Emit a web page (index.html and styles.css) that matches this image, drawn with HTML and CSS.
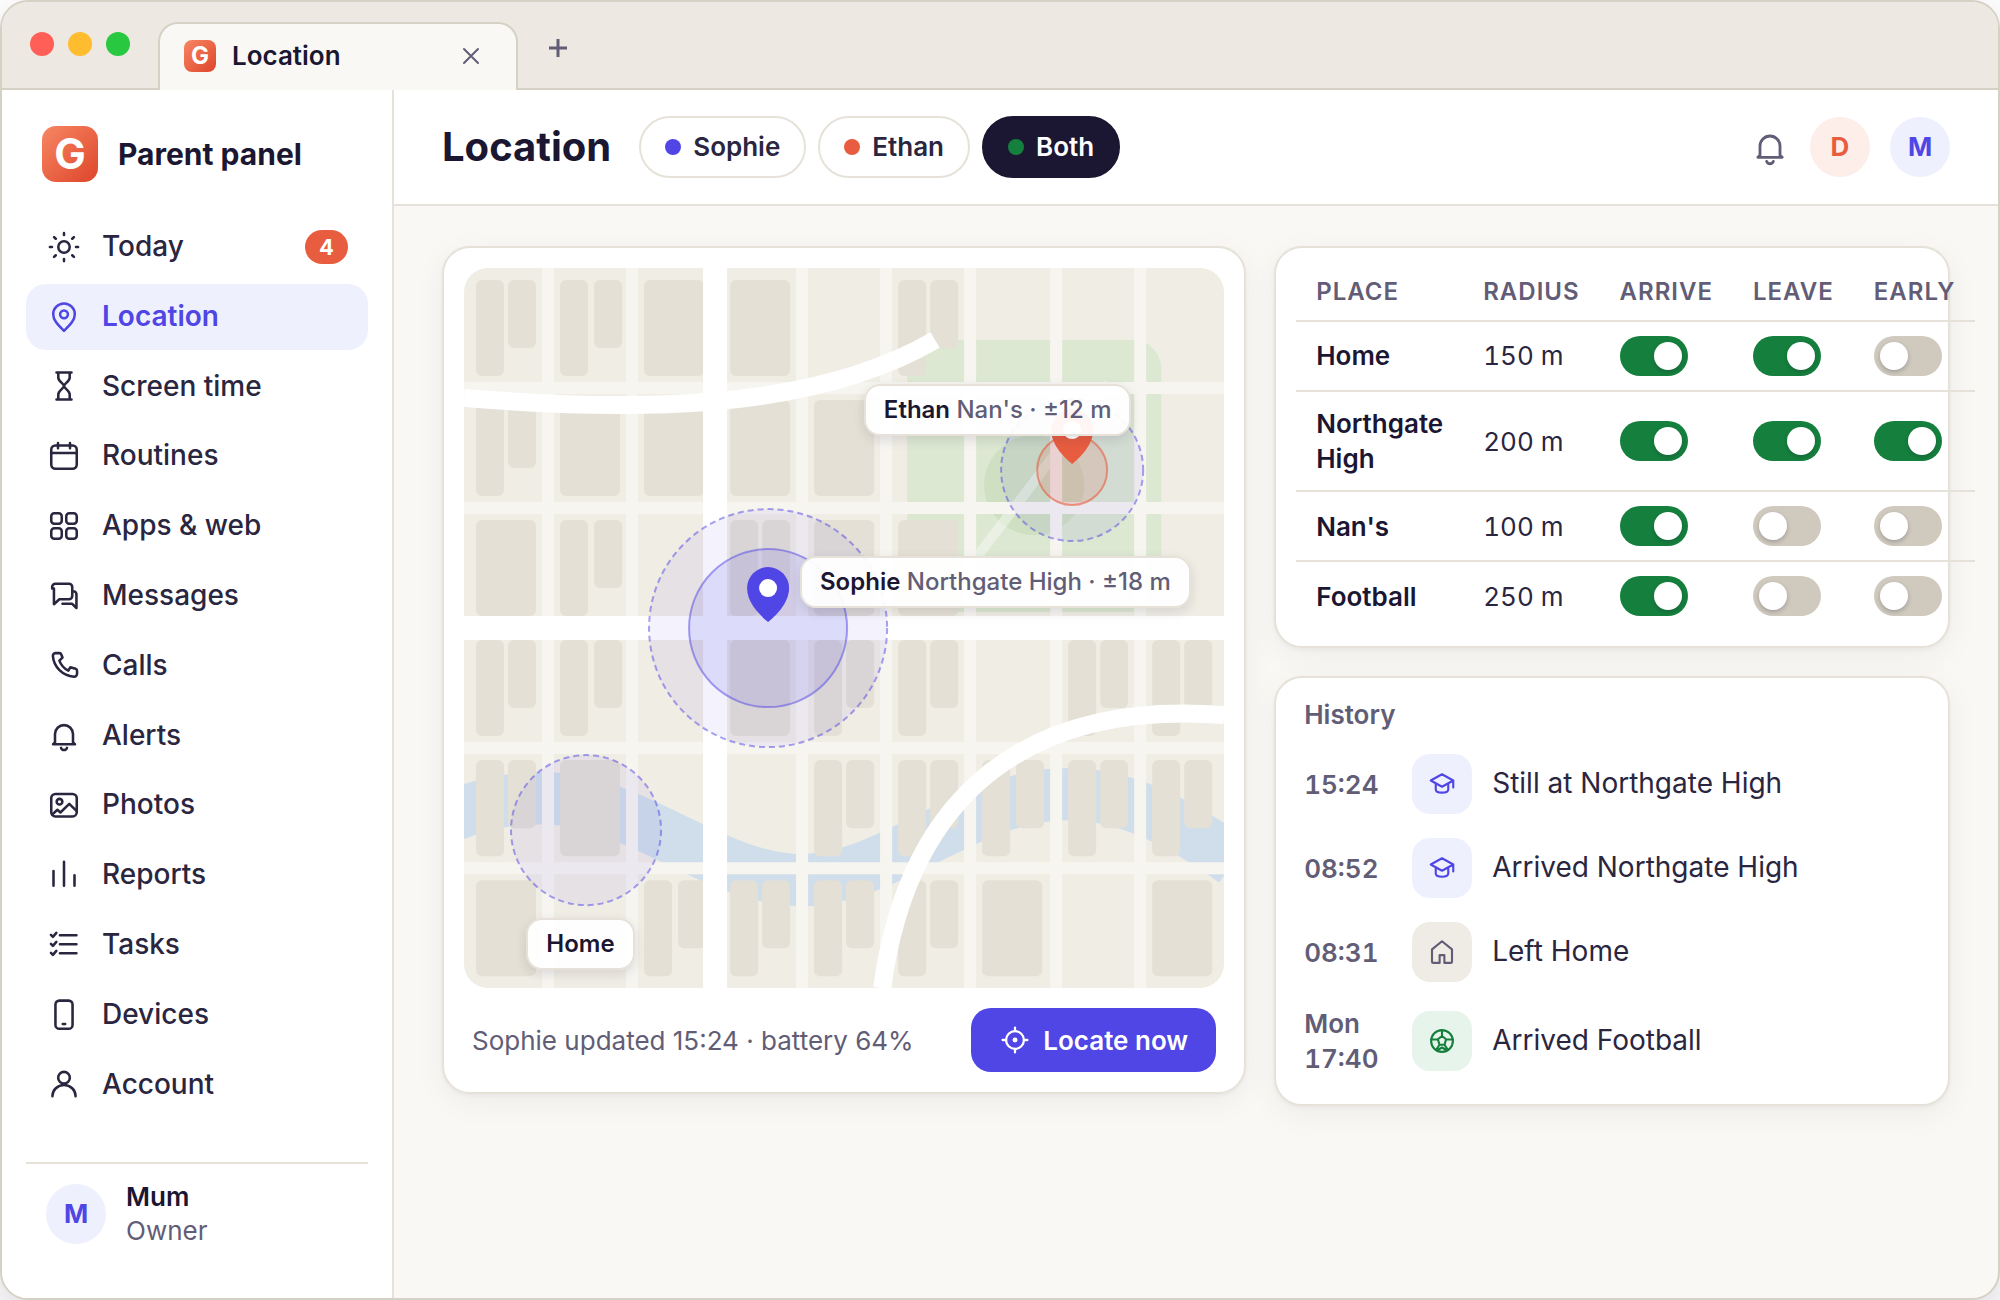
FILE: index.html
```html
<!DOCTYPE html>
<html lang="en">
<head>
<meta charset="utf-8">
<meta name="viewport" content="width=device-width, initial-scale=1">
<title>Location</title>
<link rel="stylesheet" href="styles.css">
</head>
<body>
<div class="window">
  <div class="titlebar">
    <div class="lights"><span class="light light-red"></span><span class="light light-amber"></span><span class="light light-green"></span></div>
    <div class="tab">
      <span class="logo logo-small">G</span>
      <span class="tab-title">Location</span>
      <button class="tab-button" type="button" aria-label="Close tab"><svg width="18" height="18" viewBox="0 0 18 18"><path d="M2 2l14 14M16 2L2 16"/></svg></button>
    </div>
    <button class="tab-button tab-new" type="button" aria-label="New tab"><svg width="18" height="18" viewBox="0 0 18 18"><path class="plus" d="M9 0v18M0 9h18"/></svg></button>
  </div>

  <div class="app">
    <aside class="sidebar">
      <div class="brand"><span class="logo">G</span><span class="brand-name">Parent panel</span></div>
      <nav class="nav">
        <a class="nav-item" href="#today"><svg class="icon" viewBox="0 0 24 24"><circle cx="12" cy="12" r="3.8"/><path d="M12 2.6V4M12 20v1.4M2.6 12H4M20 12h1.4M5.400 5.400l1.100 1.100M17.500 17.500l1.100 1.100M5.400 18.600l1.100-1.100M17.500 6.500l1.100-1.100"/></svg>Today<span class="badge">4</span></a>
        <a class="nav-item nav-active" href="#location" aria-current="page"><svg class="icon" viewBox="0 0 24 24"><path d="M12 21.2c4.4-4.2 7.2-7.2 7.2-11a7.2 7.2 0 0 0-14.4 0c0 3.8 2.8 6.8 7.2 11z"/><circle cx="12" cy="10.2" r="2.6"/></svg>Location</a>
        <a class="nav-item" href="#screen-time"><svg class="icon" viewBox="0 0 24 24"><path d="M7 3h10M7 21h10M8.2 3v3.5c0 2.5 3.8 4 3.8 5.5s-3.8 3-3.8 5.5V21M15.8 3v3.5c0 2.5-3.8 4-3.8 5.5s3.8 3 3.8 5.5V21"/></svg>Screen time</a>
        <a class="nav-item" href="#routines"><svg class="icon" viewBox="0 0 24 24"><rect x="3.5" y="5" width="17" height="15.5" rx="2.8"/><path d="M3.5 10h17M8 3.3v3.5M16 3.3v3.5"/></svg>Routines</a>
        <a class="nav-item" href="#apps"><svg class="icon" viewBox="0 0 24 24"><rect x="3.5" y="3.5" width="7" height="7" rx="2"/><rect x="13.5" y="3.5" width="7" height="7" rx="2"/><rect x="3.5" y="13.5" width="7" height="7" rx="2"/><rect x="13.5" y="13.5" width="7" height="7" rx="2"/></svg>Apps &amp; web</a>
        <a class="nav-item" href="#messages"><svg class="icon" viewBox="0 0 24 24"><path d="M4.1 7V6a2.2 2.2 0 0 1 2.2-2.2h9a2.2 2.2 0 0 1 2.2 2.2v6a2.2 2.2 0 0 1-2.2 2.2H8.9l-3.6 3.3V7H4.1M17.5 8.8h.8a2 2 0 0 1 2 2V20l-3-2.9h-6.3"/></svg>Messages</a>
        <a class="nav-item" href="#calls"><svg class="icon" viewBox="0 0 24 24"><path d="M6.2 3.4h2.9c.5 0 .8.3 1 .8l.9 2.2-2.1 2c1.1 2.9 3.1 5.3 6 6.7l1.3-2.2 3.6 1c.6.2.9.6.9 1.2v2.2a1.9 1.9 0 0 1-2.1 1.8C11 18.4 5.2 12.7 4.6 5.4a1.8 1.8 0 0 1 1.6-2z"/></svg>Calls</a>
        <a class="nav-item" href="#alerts"><svg class="icon" viewBox="0 0 24 24"><path d="M6 17v-5.6a6 6 0 0 1 12 0V17l1.3 1.2H4.7L6 17zM10 20.6a2.1 2.1 0 0 0 4 0"/></svg>Alerts</a>
        <a class="nav-item" href="#photos"><svg class="icon" viewBox="0 0 24 24"><rect x="3.5" y="4.6" width="17" height="15" rx="2.8"/><circle cx="9" cy="9.8" r="1.9"/><path d="M4.1 18.4l3.5-3.2 2 1.8 5.9-5.7 5 4.8"/></svg>Photos</a>
        <a class="nav-item" href="#reports"><svg class="icon" viewBox="0 0 24 24"><path d="M5 9.3V19.2M12 3.2v16M19 12.2v7"/></svg>Reports</a>
        <a class="nav-item" href="#tasks"><svg class="icon" viewBox="0 0 24 24"><path d="M9.3 5.5h11M9.3 11.5h11M9.3 17.5h11M3.3 5.3l1.3 1.3 2.3-2.7M3.3 11.3l1.3 1.3 2.3-2.7M3.3 17.3l1.3 1.3 2.3-2.7"/></svg>Tasks</a>
        <a class="nav-item" href="#devices"><svg class="icon" viewBox="0 0 24 24"><rect x="6.3" y="2.4" width="11.4" height="18.8" rx="2.6"/><path d="M11.2 18h1.6"/></svg>Devices</a>
        <a class="nav-item" href="#account"><svg class="icon" viewBox="0 0 24 24"><circle cx="12" cy="7.8" r="3.9"/><path d="M4.3 20.2v-.3a7.7 7.2 0 0 1 15.4 0v.3"/></svg>Account</a>
      </nav>
      <div class="profile">
        <span class="avatar avatar-indigo">M</span>
        <div class="profile-text"><span class="profile-name">Mum</span><span class="profile-role">Owner</span></div>
      </div>
    </aside>

    <div class="content">
      <header class="topbar">
        <h1 class="page-title">Location</h1>
        <div class="pills">
          <button class="pill" type="button"><span class="dot dot-indigo"></span>Sophie</button>
          <button class="pill" type="button"><span class="dot dot-coral"></span>Ethan</button>
          <button class="pill pill-active" type="button"><span class="dot dot-green"></span>Both</button>
        </div>
        <div class="topbar-end">
          <button class="bell" type="button" aria-label="Notifications"><svg class="icon" viewBox="0 0 24 24"><path d="M6 17v-5.6a6 6 0 0 1 12 0V17l1.3 1.2H4.7L6 17zM10 20.6a2.1 2.1 0 0 0 4 0"/></svg></button>
          <span class="avatar avatar-coral">D</span>
          <span class="avatar avatar-indigo">M</span>
        </div>
      </header>

      <main class="grid">
        <section class="card map-card">
          <div class="map">
            <svg class="map-art" viewBox="0 0 760 720" preserveAspectRatio="xMidYMid slice">
              <rect class="m-park" x="443" y="72" width="254" height="272" rx="28"/>
              <circle class="m-grove" cx="570" cy="217" r="50"/>
              <path class="m-path" d="M480 332L645 115"/>
              <path class="m-river" d="M-20 551C15 536 45 530 80 530C170 530 250 612 338 612C425 612 505 526 603 526C660 526 712 552 770 593"/>
              <g class="m-blocks">
                <rect x="12" y="12" width="28" height="96" rx="6"/><rect x="44" y="12" width="28" height="68" rx="6"/>
                <rect x="96" y="12" width="28" height="96" rx="6"/><rect x="130" y="12" width="28" height="68" rx="6"/>
                <rect x="180" y="12" width="60" height="96" rx="6"/>
                <rect x="266" y="12" width="60" height="96" rx="6"/>
                <rect x="434" y="12" width="28" height="96" rx="6"/><rect x="466" y="12" width="28" height="68" rx="6"/>
                <rect x="12" y="132" width="28" height="96" rx="6"/><rect x="44" y="132" width="28" height="68" rx="6"/>
                <rect x="96" y="132" width="60" height="96" rx="6"/>
                <rect x="180" y="132" width="60" height="96" rx="6"/>
                <rect x="266" y="132" width="60" height="96" rx="6"/>
                <rect x="350" y="132" width="60" height="96" rx="6"/>
                <rect x="12" y="252" width="60" height="96" rx="6"/>
                <rect x="96" y="252" width="28" height="96" rx="6"/><rect x="130" y="252" width="28" height="68" rx="6"/>
                <rect x="266" y="252" width="28" height="96" rx="6"/><rect x="298" y="252" width="28" height="68" rx="6"/>
                <rect x="350" y="252" width="60" height="96" rx="6"/>
                <rect x="434" y="252" width="60" height="96" rx="6"/>
                <rect x="12" y="372" width="28" height="96" rx="6"/><rect x="44" y="372" width="28" height="68" rx="6"/>
                <rect x="96" y="372" width="28" height="96" rx="6"/><rect x="130" y="372" width="28" height="68" rx="6"/>
                <rect x="266" y="372" width="60" height="96" rx="6"/>
                <rect x="350" y="372" width="28" height="96" rx="6"/><rect x="382" y="372" width="28" height="68" rx="6"/>
                <rect x="434" y="372" width="28" height="96" rx="6"/><rect x="466" y="372" width="28" height="68" rx="6"/>
                <rect x="604" y="372" width="28" height="96" rx="6"/><rect x="636" y="372" width="28" height="68" rx="6"/>
                <rect x="688" y="372" width="28" height="96" rx="6"/><rect x="720" y="372" width="28" height="68" rx="6"/>
                <rect x="12" y="492" width="28" height="96" rx="6"/><rect x="44" y="492" width="28" height="68" rx="6"/>
                <rect x="96" y="492" width="60" height="96" rx="6"/>
                <rect x="350" y="492" width="28" height="96" rx="6"/><rect x="382" y="492" width="28" height="68" rx="6"/>
                <rect x="434" y="492" width="28" height="96" rx="6"/><rect x="466" y="492" width="28" height="68" rx="6"/>
                <rect x="518" y="492" width="28" height="96" rx="6"/><rect x="552" y="492" width="28" height="68" rx="6"/>
                <rect x="604" y="492" width="28" height="96" rx="6"/><rect x="636" y="492" width="28" height="68" rx="6"/>
                <rect x="688" y="492" width="28" height="96" rx="6"/><rect x="720" y="492" width="28" height="68" rx="6"/>
                <rect x="12" y="612" width="60" height="96" rx="6"/>
                <rect x="180" y="612" width="28" height="96" rx="6"/><rect x="214" y="612" width="28" height="68" rx="6"/>
                <rect x="266" y="612" width="28" height="96" rx="6"/><rect x="298" y="612" width="28" height="68" rx="6"/>
                <rect x="350" y="612" width="28" height="96" rx="6"/><rect x="382" y="612" width="28" height="68" rx="6"/>
                <rect x="434" y="612" width="28" height="96" rx="6"/><rect x="466" y="612" width="28" height="68" rx="6"/>
                <rect x="518" y="612" width="60" height="96" rx="6"/>
                <rect x="688" y="612" width="60" height="96" rx="6"/>
              </g>
              <path class="m-street" d="M84 0V720M168 0V720M338 0V720M422 0V720M506 0V720M592 0V720M676 0V720M0 120H760M0 240H760M0 480H760M0 600H760"/>
              <path class="m-avenue" d="M251 0V720M0 360H760"/>
              <path class="m-curve" d="M0 130C150 142 340 148 471 72M418 720C445 520 570 432 760 447"/>
              <g class="m-zones">
                <circle cx="304" cy="360" r="119"/><circle cx="122" cy="562" r="75"/><circle cx="608" cy="202" r="71"/>
              </g>
              <circle class="m-near m-near-indigo" cx="304" cy="360" r="79"/>
              <circle class="m-near m-near-coral" cx="608" cy="202" r="35"/>
              <path class="pin-indigo" d="M304 354c-6-5-21-18-21-34a21 21 0 0 1 42 0c0 16-15 29-21 34z"/><circle class="pin-eye" cx="304" cy="320" r="9"/>
              <path class="pin-coral" d="M608 196c-6-5-21-18-21-34a21 21 0 0 1 42 0c0 16-15 29-21 34z"/><circle class="pin-eye" cx="608" cy="162" r="9"/>
            </svg>
            <span class="tag tag-ethan"><b>Ethan</b> Nan's · ±12 m</span>
            <span class="tag tag-sophie"><b>Sophie</b> Northgate High · ±18 m</span>
            <span class="tag tag-home"><b>Home</b></span>
          </div>
          <div class="map-foot">
            <span class="map-status">Sophie updated 15:24 · battery 64%</span>
            <button class="primary" type="button"><svg class="icon" viewBox="0 0 24 24"><circle cx="12" cy="12" r="6.7"/><path d="M12 2.7v2.6M12 18.7v2.6M2.7 12h2.6M18.7 12h2.6"/><circle class="solid" cx="12" cy="12" r="1"/></svg>Locate now</button>
          </div>
        </section>

        <div class="side">
          <section class="card places">
            <table class="table">
              <thead><tr><th scope="col">PLACE</th><th scope="col">RADIUS</th><th scope="col">ARRIVE</th><th scope="col">LEAVE</th><th scope="col">EARLY</th></tr></thead>
              <tbody>
                <tr><th scope="row">Home</th><td>150 m</td><td><input class="toggle" type="checkbox" aria-label="Home arrive" checked></td><td><input class="toggle" type="checkbox" aria-label="Home leave" checked></td><td><input class="toggle" type="checkbox" aria-label="Home early"></td></tr>
                <tr><th scope="row">Northgate High</th><td>200 m</td><td><input class="toggle" type="checkbox" aria-label="Northgate High arrive" checked></td><td><input class="toggle" type="checkbox" aria-label="Northgate High leave" checked></td><td><input class="toggle" type="checkbox" aria-label="Northgate High early" checked></td></tr>
                <tr><th scope="row">Nan's</th><td>100 m</td><td><input class="toggle" type="checkbox" aria-label="Nan's arrive" checked></td><td><input class="toggle" type="checkbox" aria-label="Nan's leave"></td><td><input class="toggle" type="checkbox" aria-label="Nan's early"></td></tr>
                <tr><th scope="row">Football</th><td>250 m</td><td><input class="toggle" type="checkbox" aria-label="Football arrive" checked></td><td><input class="toggle" type="checkbox" aria-label="Football leave"></td><td><input class="toggle" type="checkbox" aria-label="Football early"></td></tr>
              </tbody>
            </table>
          </section>

          <section class="card history">
            <h2 class="history-title">History</h2>
            <ul class="events">
              <li class="event"><time class="event-time">15:24</time><span class="event-icon event-indigo"><svg class="icon" viewBox="0 0 24 24"><path d="M3 9.2L12 4.2l9 5-9 5zM7 11.8v4.6c0 3.4 10 3.4 10 0v-4.6M21 9.2v5.5"/></svg></span>Still at Northgate High</li>
              <li class="event"><time class="event-time">08:52</time><span class="event-icon event-indigo"><svg class="icon" viewBox="0 0 24 24"><path d="M3 9.2L12 4.2l9 5-9 5zM7 11.8v4.6c0 3.4 10 3.4 10 0v-4.6M21 9.2v5.5"/></svg></span>Arrived Northgate High</li>
              <li class="event"><time class="event-time">08:31</time><span class="event-icon event-sand"><svg class="icon" viewBox="0 0 24 24"><path d="M4 9.9L12 3.4l8 6.5v9.8a1 1 0 0 1-1 1h-5.1v-6.2h-3.8v6.2H5a1 1 0 0 1-1-1z"/></svg></span>Left Home</li>
              <li class="event"><time class="event-time">Mon 17:40</time><span class="event-icon event-green"><svg class="icon" viewBox="0 0 24 24"><circle cx="12" cy="12" r="8.7"/><path d="M12 8l3.3 2.6-1.3 4.4h-4l-1.3-4.4zM12 3.3V8M15.3 10.6l5.2.2M8.7 10.6l-5.2.2M10 15l-2.8 4.2M14 15l2.8 4.2M8.2 19.4l3.8-2.2 3.8 2.2"/></svg></span>Arrived Football</li>
            </ul>
          </section>
        </div>
      </main>
    </div>
  </div>
</div>
</body>
</html>
```
FILE: styles.css
```css
* { box-sizing: border-box; }

:root {
  --ink: #1b1631;
  --text: #2a2640;
  --muted: #625d76;
  --indigo: #4f46e5;
  --indigo-soft: #eef0fe;
  --coral: #e85d40;
  --coral-soft: #fdeeea;
  --green: #15803d;
  --green-soft: #e7f4eb;
  --sand: #efece5;
  --line: #e7e2d9;
  --frame: #d6d1c5;
}

body {
  margin: 0;
  background: #fff;
  color: var(--text);
  font: 400 26px/1.35 Inter, "Liberation Sans", sans-serif;
}

button {
  margin: 0;
  border: 0;
  background: none;
  color: inherit;
  font: inherit;
  cursor: pointer;
}

.icon {
  width: 36px;
  height: 36px;
  flex: none;
  fill: none;
  stroke: currentColor;
  stroke-width: 1.7;
  stroke-linecap: round;
  stroke-linejoin: round;
}

.window {
  display: flex;
  flex-direction: column;
  min-height: 100vh;
  overflow: hidden;
  border: 2px solid var(--frame);
  border-radius: 28px;
  background: #f9f8f4;
  box-shadow: 0 24px 60px rgba(27, 22, 49, .18);
}

/* Browser chrome */
.titlebar {
  display: flex;
  height: 88px;
  padding-left: 28px;
  background: #ede8e1;
  box-shadow: inset 0 -2px var(--frame);
}
.lights { display: flex; gap: 14px; padding-top: 30px; }
.light { width: 24px; height: 24px; border-radius: 50%; }
.light-red { background: #ff5f57; }
.light-amber { background: #febc2e; }
.light-green { background: #28c840; }
.tab {
  display: flex;
  align-items: center;
  gap: 16px;
  width: 360px;
  margin: 20px 0 0 28px;
  padding: 0 26px 2px 24px;
  border: 2px solid var(--frame);
  border-bottom: 0;
  border-radius: 20px 20px 0 0;
  background: #f9f8f4;
}
.tab-title { flex: 1; color: var(--ink); font-weight: 600; }
.tab-button { display: flex; padding: 10px; color: var(--muted); }
.tab-button svg { fill: none; stroke: currentColor; stroke-width: 2; stroke-linecap: round; }
.tab-button .plus { stroke-width: 3; stroke-linecap: butt; }
.tab-new { align-self: center; margin: 4px 0 0 21px; }

.logo {
  display: grid;
  place-items: center;
  flex: none;
  width: 56px;
  height: 56px;
  border-radius: 14px;
  background: linear-gradient(135deg, #f78763, #de452b);
  color: #fff;
  font-size: 42px;
  font-weight: 700;
  line-height: 1;
}
.logo-small { width: 32px; height: 32px; border-radius: 8px; font-size: 24px; }

.app { display: flex; flex: 1; }

/* Sidebar */
.sidebar {
  display: flex;
  flex-direction: column;
  flex: none;
  width: 392px;
  padding: 36px 24px 50px;
  border-right: 2px solid var(--line);
  background: #fff;
}
.brand { display: flex; align-items: center; gap: 20px; padding: 0 16px; margin-bottom: 32px; }
.brand-name { color: var(--ink); font-size: 30px; font-weight: 700; }
.nav { display: flex; flex-direction: column; gap: 4px; }
.nav-item {
  display: flex;
  align-items: center;
  gap: 20px;
  padding: 14px 20px;
  border-radius: 20px;
  color: var(--text);
  font-size: 28px;
  font-weight: 500;
  text-decoration: none;
}
.nav-active { background: var(--indigo-soft); color: var(--indigo); font-weight: 600; }
.badge {
  margin-left: auto;
  padding: 0 14px;
  border-radius: 17px;
  background: var(--coral);
  color: #fff;
  font-size: 22px;
  font-weight: 700;
  line-height: 34px;
}
.profile {
  display: flex;
  align-items: center;
  gap: 20px;
  margin-top: auto;
  padding: 16px 20px 0;
  border-top: 2px solid var(--line);
}
.profile-text { display: flex; flex-direction: column; line-height: 34px; }
.profile-name { color: var(--ink); font-weight: 600; }
.profile-role { color: var(--muted); }
.avatar {
  display: grid;
  place-items: center;
  flex: none;
  width: 60px;
  height: 60px;
  border-radius: 50%;
  font-weight: 700;
}
.avatar-indigo { background: var(--indigo-soft); color: var(--indigo); }
.avatar-coral { background: var(--coral-soft); color: var(--coral); }

/* Top bar */
.content { flex: 1; min-width: 0; }
.topbar {
  display: flex;
  align-items: center;
  gap: 28px;
  height: 116px;
  padding: 0 48px;
  border-bottom: 2px solid var(--line);
  background: #fff;
}
.page-title { margin: 0; color: var(--ink); font-size: 40px; font-weight: 700; }
.pills { display: flex; gap: 12px; }
.pill {
  display: flex;
  align-items: center;
  gap: 12px;
  padding: 12px 24px;
  border: 2px solid var(--line);
  border-radius: 32px;
  background: #fff;
  color: var(--text);
  font-weight: 600;
  line-height: 34px;
}
.pill-active { border-color: var(--ink); background: var(--ink); color: #fff; }
.dot { width: 16px; height: 16px; border-radius: 50%; }
.dot-indigo { background: var(--indigo); }
.dot-coral { background: var(--coral); }
.dot-green { background: var(--green); }
.topbar-end { display: flex; align-items: center; gap: 20px; margin-left: auto; }
.bell { display: flex; padding: 0; color: var(--muted); }
.bell .icon { width: 40px; height: 40px; }

/* Cards */
.grid {
  display: grid;
  grid-template-columns: minmax(0, 1.19fr) minmax(0, 1fr);
  align-items: start;
  gap: 28px;
  padding: 40px 48px;
}
.card {
  border: 2px solid var(--line);
  border-radius: 28px;
  background: #fff;
  box-shadow: 0 2px 4px rgba(27, 22, 49, .04), 0 8px 32px rgba(27, 22, 49, .05);
}
.side { display: grid; grid-template-columns: minmax(0, 1fr); gap: 28px; }

/* Map */
.map-card { padding: 20px; }
.map {
  position: relative;
  aspect-ratio: 760 / 720;
  overflow: hidden;
  border-radius: 24px;
  background: #f0ede5;
}
.map-art { display: block; width: 100%; height: 100%; }
.m-park { fill: #dce8d2; }
.m-grove { fill: #cfe0c2; }
.m-path { fill: none; stroke: #fff; stroke-opacity: .4; stroke-width: 10; }
.m-river { fill: none; stroke: #cfdeea; stroke-width: 52; }
.m-blocks { fill: #e4e0d5; }
.m-street { fill: none; stroke: #f7f5f0; stroke-width: 12; }
.m-avenue { fill: none; stroke: #fff; stroke-width: 24; }
.m-curve { fill: none; stroke: #fff; stroke-width: 18; }
.m-zones { fill: rgba(79, 70, 229, .07); stroke: rgba(79, 70, 229, .5); stroke-width: 2; stroke-dasharray: 6 4; }
.m-near { stroke-width: 2; }
.m-near-indigo { fill: rgba(79, 70, 229, .13); stroke: rgba(79, 70, 229, .5); }
.m-near-coral { fill: rgba(232, 93, 64, .16); stroke: rgba(232, 93, 64, .6); }
.pin-indigo { fill: var(--indigo); }
.pin-coral { fill: var(--coral); }
.pin-eye { fill: #fff; }
.tag {
  position: absolute;
  padding: 8px 18px;
  border: 2px solid var(--line);
  border-radius: 16px;
  background: rgba(255, 255, 255, .94);
  box-shadow: 0 4px 12px rgba(27, 22, 49, .12);
  color: var(--muted);
  font-size: 24px;
  font-weight: 500;
  line-height: 32px;
  white-space: nowrap;
}
.tag b { color: var(--ink); font-weight: 600; }
.tag-ethan { left: 52.6%; top: 16.1%; }
.tag-sophie { left: 44.2%; top: 40%; }
.tag-home { left: 8.2%; top: 90.3%; }
.map-foot {
  display: flex;
  align-items: center;
  justify-content: space-between;
  padding: 20px 8px 0;
}
.map-status { color: var(--muted); }
.primary {
  display: flex;
  align-items: center;
  gap: 12px;
  height: 64px;
  padding: 0 28px;
  border-radius: 20px;
  background: var(--indigo);
  color: #fff;
  font-weight: 600;
}
.primary .icon { width: 32px; height: 32px; }
.primary .solid { fill: currentColor; }

/* Places table; it may run past the edge of its card */
.places { padding: 16px 20px; }
.table { border-spacing: 0; font-variant-numeric: tabular-nums; }
.table th, .table td { padding: 14px 20px; border-bottom: 2px solid var(--line); text-align: left; }
.table thead th {
  padding: 12px 20px;
  color: var(--muted);
  font-size: 24px;
  font-weight: 600;
  letter-spacing: 1px;
  line-height: 32px;
}
.table tbody th { color: var(--ink); font-weight: 600; }
.table tbody tr:last-child th, .table tbody tr:last-child td { border-bottom: 0; }
.toggle {
  display: block;
  width: 68px;
  height: 40px;
  margin: 0;
  padding: 6px;
  appearance: none;
  border-radius: 20px;
  background: #cfc9be;
  cursor: pointer;
}
.toggle::before {
  content: "";
  display: block;
  width: 28px;
  height: 28px;
  border-radius: 50%;
  background: #fff;
  box-shadow: 0 2px 4px rgba(27, 22, 49, .25);
}
.toggle:checked { background: var(--green); }
.toggle:checked::before { margin-left: auto; }

/* History */
.history { padding: 16px 28px; }
.history-title { margin: 0 0 6px; color: var(--muted); font-size: 26px; font-weight: 600; line-height: 42px; }
.events { margin: 0; padding: 0; list-style: none; }
.event { display: flex; align-items: center; gap: 20px; padding: 12px 0; font-size: 28px; }
.event-time {
  flex: none;
  width: 88px;
  color: var(--muted);
  font-size: 26px;
  font-variant-numeric: tabular-nums;
  font-weight: 600;
  line-height: 35px;
}
.event-icon { display: grid; place-items: center; flex: none; width: 60px; height: 60px; border-radius: 18px; }
.event-icon .icon { width: 30px; height: 30px; }
.event-indigo { background: var(--indigo-soft); color: var(--indigo); }
.event-sand { background: var(--sand); color: var(--muted); }
.event-green { background: var(--green-soft); color: var(--green); }
```
